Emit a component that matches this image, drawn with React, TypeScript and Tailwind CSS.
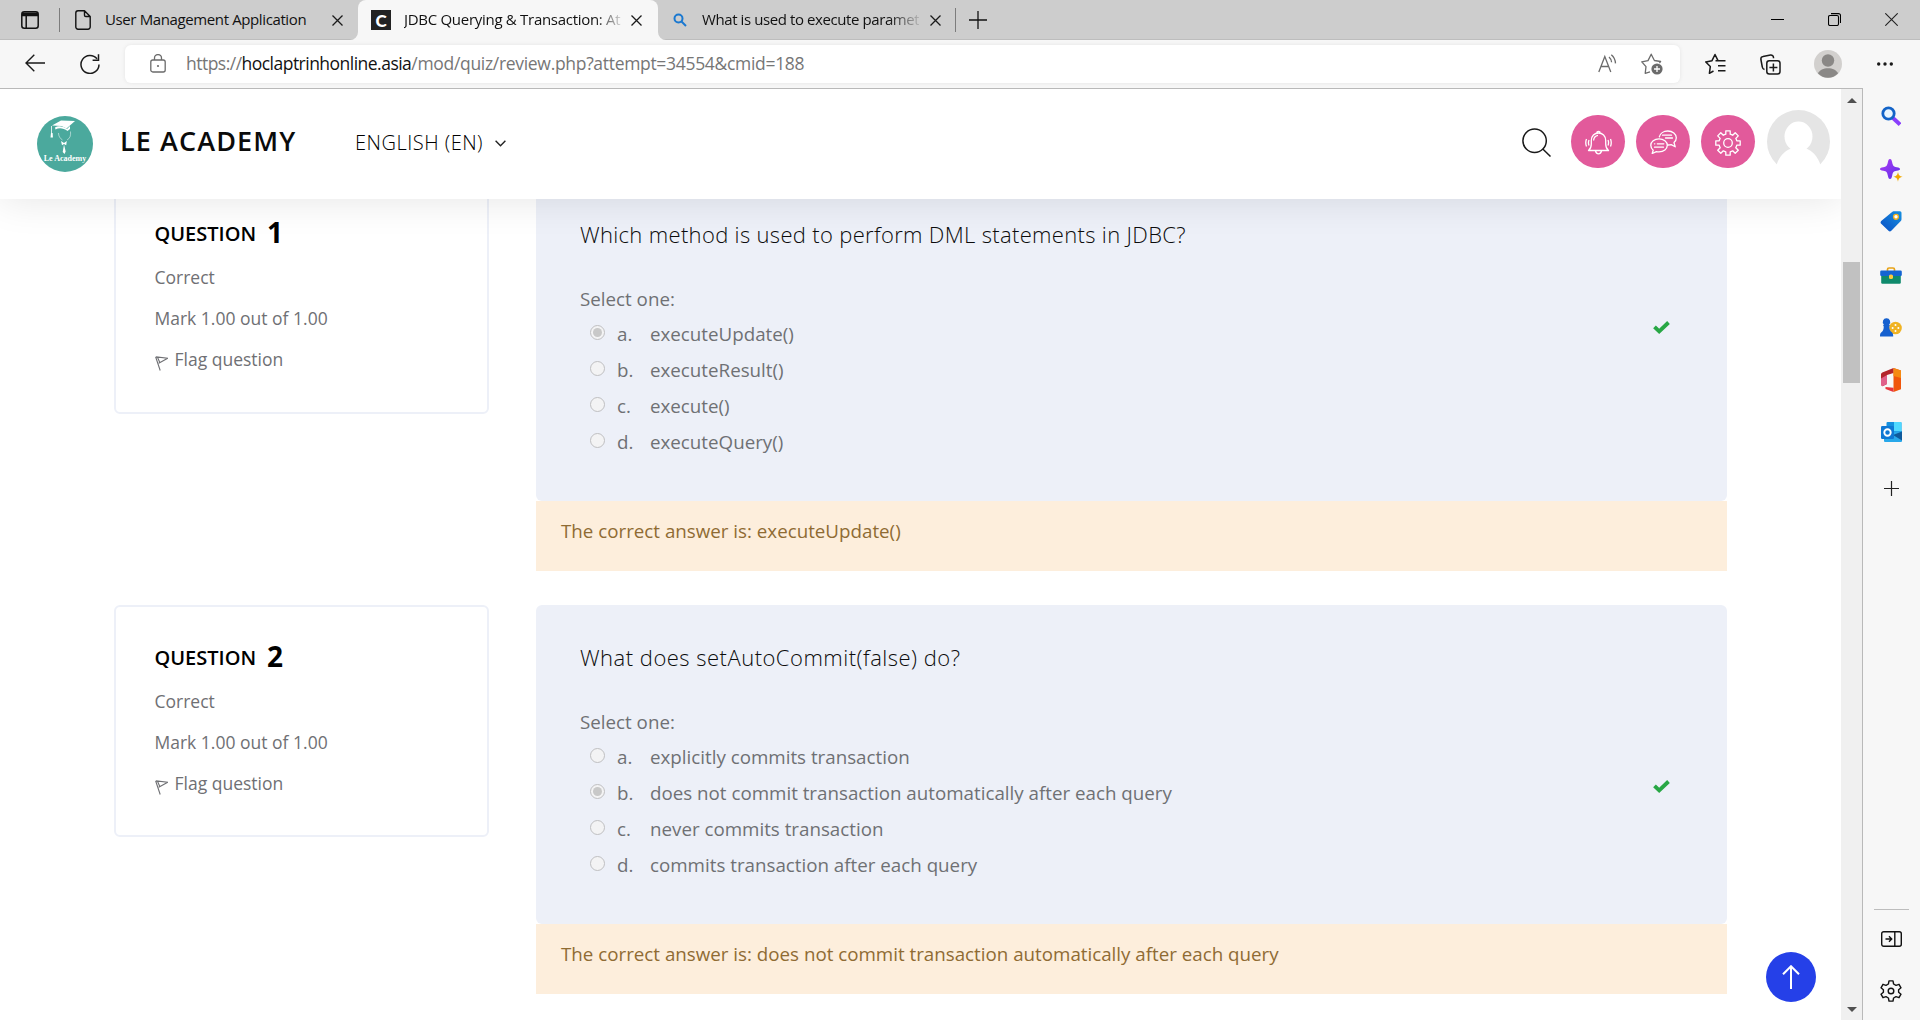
import type { ReactNode } from "react";

type Answer = { letter: string; text: string; chosen?: boolean };
type Question = { no: number; title: string; titleClass: string; infoClass: string; answers: Answer[]; correct: string };

const questions: Question[] = [
  {
    no: 1,
    title: "Which method is used to perform DML statements in JDBC?",
    titleClass: "tracking-[0.33px] -mt-px",
    infoClass: "-mt-px",
    answers: [
      { letter: "a.", text: "executeUpdate()", chosen: true },
      { letter: "b.", text: "executeResult()" },
      { letter: "c.", text: "execute()" },
      { letter: "d.", text: "executeQuery()" },
    ],
    correct: "executeUpdate()",
  },
  {
    no: 2,
    title: "What does setAutoCommit(false) do?",
    titleClass: "tracking-[0.49px] -mt-px",
    infoClass: "",
    answers: [
      { letter: "a.", text: "explicitly commits transaction" },
      { letter: "b.", text: "does not commit transaction automatically after each query", chosen: true },
      { letter: "c.", text: "never commits transaction" },
      { letter: "d.", text: "commits transaction after each query" },
    ],
    correct: "does not commit transaction automatically after each query",
  },
];

const CloseX = ({ className = "" }: { className?: string }) => (
  <svg className={`h-[11px] w-[11px] shrink-0 ${className}`} viewBox="0 0 11 11" fill="none" stroke="#1a1a1a" strokeWidth="1.3">
    <path d="M.5 .5l10 10M10.5 .5l-10 10" />
  </svg>
);

const Flare = ({ className = "" }: { className?: string }) => (
  <svg className={`absolute bottom-0 h-2 w-2 ${className}`} viewBox="0 0 8 8">
    <path d="M8 0v8H0a8 8 0 0 0 8-8z" fill="#f7f7f7" />
  </svg>
);

function TabBar() {
  return (
    <div className="relative flex h-10 shrink-0 items-center bg-[#cdcdcd] text-[15px] text-[#111]">
      <div className="absolute inset-x-0 bottom-0 h-px bg-[#bdbdbd]" />
      <svg className="ml-[21px] h-[18px] w-[18px] shrink-0" viewBox="0 0 18 18" fill="none" stroke="#111" strokeWidth="1.5">
        <rect x=".8" y=".8" width="16.4" height="16.4" rx="2.5" />
        <path d="M1 3h16M1 4.5h16M5.2 5v12" strokeWidth="1.5" />
        <path d="M1.5 3h15" strokeWidth="3" />
      </svg>
      <div className="ml-5 h-6 w-px bg-[#7c7c7c]" />
      <svg className="ml-[15px] h-5 w-4 shrink-0" viewBox="0 0 16 20" fill="none" stroke="#111" strokeWidth="1.4" strokeLinejoin="round">
        <path d="M3 .8h6.500L15.200 6.500V17a2.200 2.200 0 0 1-2.200 2.200H3A2.200 2.200 0 0 1 .8 17V3A2.200 2.200 0 0 1 3 .8zM9.500 1v4.200a1.300 1.300 0 0 0 1.300 1.300H15" />
      </svg>
      <span className="-mt-0.5 ml-[14px] w-[213px] whitespace-nowrap tracking-[-0.38px]">User Management Application</span>
      <CloseX className="ml-[14px]" />
      <div className="relative ml-[15px] flex h-10 w-[300px] items-center rounded-t-lg bg-[#f7f7f7]">
        <Flare className="-left-2" />
        <Flare className="-right-2 -scale-x-100" />
        <div className="ml-[13px] flex h-5 w-5 shrink-0 items-center justify-center bg-[#222] font-['Lato'] text-[17px] leading-none font-black text-white">C</div>
        <span className="-mt-0.5 ml-[13px] w-[217px] overflow-hidden whitespace-nowrap tracking-[-0.29px] [mask-image:linear-gradient(to_right,black_88%,transparent_102%)]">
          JDBC Querying &amp; Transaction: At
        </span>
        <CloseX className="ml-[10px]" />
      </div>
      <svg className="ml-[15px] h-[14px] w-[14px] shrink-0" viewBox="0 0 14 14" fill="none" stroke="#1a78d0" strokeWidth="2">
        <circle cx="5.500" cy="5.500" r="4" />
        <path d="M8.500 8.500l4.500 4.500" />
      </svg>
      <span className="-mt-0.5 ml-[15px] w-[217px] overflow-hidden whitespace-nowrap tracking-[-0.41px] [mask-image:linear-gradient(to_right,black_86%,transparent_102%)]">
        What is used to execute paramet
      </span>
      <CloseX className="ml-[11px]" />
      <div className="ml-[14px] h-6 w-px bg-[#7c7c7c]" />
      <svg className="-mt-px ml-[13px] h-[18px] w-[18px] shrink-0" viewBox="0 0 18 18" stroke="#111" strokeWidth="1.3">
        <path d="M9 0v18M0 9h18" />
      </svg>
      <div className="-mt-px mr-[22px] ml-auto flex items-center gap-[44px]">
        <svg className="h-[13px] w-[13px]" viewBox="0 0 13 13" stroke="#000" strokeWidth="1">
          <path d="M0 6.500h13" />
        </svg>
        <svg className="h-[13px] w-[13px]" viewBox="0 0 13 13" fill="none" stroke="#000" strokeWidth="1.100">
          <rect x=".5" y="2.500" width="10" height="10" rx="1.500" />
          <path d="M3 .6h7.500a2 2 0 0 1 2 2v7.500" />
        </svg>
        <svg className="h-[13px] w-[13px]" viewBox="0 0 13 13" stroke="#222" strokeWidth="1.100">
          <path d="M.3 .3l12.400 12.400M12.700 .3L.3 12.700" />
        </svg>
      </div>
    </div>
  );
}

function Toolbar() {
  return (
    <div className="flex h-12 shrink-0 items-center bg-[#f7f7f7]">
      <svg className="-mt-0.5 ml-[25px] h-[18px] w-5 shrink-0" viewBox="0 0 20 18" fill="none" stroke="#1a1a1a" strokeWidth="1.400">
        <path d="M20 9H1M9.300 .7L1 9l8.300 8.300" />
      </svg>
      <svg className="ml-[35px] h-5 w-5 shrink-0" viewBox="0 0 20 20" fill="none" stroke="#1a1a1a" strokeWidth="1.500">
        <path d="M19 10.500A9 9 0 1 1 17 4.800M18.500 .3v5.900h-5.900" />
      </svg>
      <div className="ml-[25px] flex h-[38px] w-[1555px] shrink-0 items-center rounded-md bg-white shadow-[0_0_4px_rgba(0,0,0,0.08)]">
        <svg className="-mt-px ml-[25px] h-[19px] w-4 shrink-0" viewBox="0 0 16 19" fill="none" stroke="#6b6b6b" strokeWidth="1.300">
          <rect x=".8" y="6" width="14.400" height="12" rx="2" />
          <path d="M4.500 6V4a3.500 3.500 0 0 1 7 0v2" />
          <circle cx="8" cy="12" r="1.100" fill="#6b6b6b" stroke="none" />
        </svg>
        <span className="-mt-0.5 ml-5 text-[17.5px] whitespace-nowrap text-[#767676]">
          <span className="tracking-[-0.52px]">
            https://<span className="text-[#111]">hoclaptrinhonline.asia</span>
          </span>
          <span className="tracking-[-0.31px]">/mod/quiz/review.php?attempt=34554&amp;cmid=188</span>
        </span>
        <svg className="-mt-0.5 ml-auto h-[19px] w-5 shrink-0" viewBox="0 0 20 19" fill="none" stroke="#6b6b6b" strokeWidth="1.300">
          <path d="M.8 18L6.800 2.500 12.800 18M3 12.500h7.600M11 3c1.600 1.400 2.400 3 2.600 5.200M13.300 .8c2.600 2.200 4 5 4.200 8.600" />
        </svg>
        <svg className="mr-[17px] ml-[23px] h-[22px] w-[22px] shrink-0" viewBox="0 0 22 22" fill="none" stroke="#6b6b6b" strokeWidth="1.300" strokeLinejoin="round">
          <path d="M9 18.800L4.200 20.300l.8-6.600L.8 8.800l6.200-1.200L10.200 1.200l3.200 6.300 6.200 1-1.300 1.500" />
          <circle cx="16" cy="16" r="5.600" fill="#6b6b6b" stroke="none" />
          <path d="M16 13v6M13 16h6" stroke="#fff" />
        </svg>
      </div>
      <svg className="-mt-px ml-[25px] h-[22px] w-[21px] shrink-0" viewBox="0 0 21 22" fill="none" stroke="#1a1a1a" strokeWidth="1.500" strokeLinejoin="round">
        <path d="M8.500 18L4.400 20.300l.9-6.700L.8 8.900l6.200-1.200L10 1.500l3 6.200M10.500 7.800H20.500M13 12.800h7.500M13 17.800h7.500" />
      </svg>
      <svg className="ml-[34px] h-[21px] w-[21px] shrink-0" viewBox="0 0 21 21" fill="none" stroke="#1a1a1a" strokeWidth="1.500" strokeLinejoin="round">
        <rect x="6.800" y="6.800" width="13.200" height="13.200" rx="2.500" />
        <path d="M13.400 9.500v8M9.400 13.500h8M4.500 15.500A3 3 0 0 1 2.300 13L.9 5.500A2.600 2.600 0 0 1 3 2.600L10.500 1A2.600 2.600 0 0 1 13.500 3.500v.8" />
      </svg>
      <svg className="ml-[33px] h-7 w-7 shrink-0" viewBox="0 0 28 28">
        <circle cx="14" cy="14" r="14" fill="#d2d0ce" />
        <circle cx="14" cy="10.500" r="6.200" fill="#8a8886" />
        <path d="M4 23.500C5.500 20 9.500 18.200 14 18.200S22.500 20 24 23.500A14 14 0 0 1 4 23.500z" fill="#8a8886" />
      </svg>
      <svg className="-mt-px ml-[35px] h-1 w-4 shrink-0" viewBox="0 0 16 4" fill="#1a1a1a">
        <circle cx="1.700" cy="2" r="1.700" />
        <circle cx="8" cy="2" r="1.700" />
        <circle cx="14.300" cy="2" r="1.700" />
      </svg>
    </div>
  );
}

function Logo() {
  return (
    <div className="relative ml-[37px] h-14 w-14 shrink-0 rounded-full bg-[#4ba99d]">
      <svg className="h-14 w-14" viewBox="0 0 56 56" fill="#fff">
        <path d="M15 9.500L24 4.500l14 .5-8.500 7.500-5-2.500z" />
        <path d="M18 11.500c3-2 8-1.500 12 1.500l3-3v3l-2.500 2c-4-3-8.500-3.500-12-1.500z" />
        <path d="M14.500 10v7" fill="none" stroke="#fff" strokeWidth=".8" />
        <path d="M14 17h1.600l.3 4.500h-2.400z" />
        <path d="M33.500 15.500c.5 4-.5 7-3.500 8.500M21.500 17c0 3 1.500 5.500 4 7" fill="none" stroke="#fff" strokeWidth=".5" />
        <path d="M24 25l3 2 2.800-2-.6 4.200-2.200-1.200-2 1.200zM27 28.500l1.700 7-1.200 2.500-1.800-2z" />
      </svg>
      <span className="absolute inset-x-0 top-[38px] text-center font-['Liberation_Serif'] text-[8px] leading-[10px] font-bold whitespace-nowrap text-white">Le Academy</span>
    </div>
  );
}

const RoundButton = ({ children }: { children: ReactNode }) => (
  <div className="flex h-[53px] w-[54px] shrink-0 items-center justify-center rounded-full bg-[#e25a9b]">{children}</div>
);

function Header() {
  return (
    <header className="relative z-10 flex h-[110px] shrink-0 items-center bg-white shadow-[0_0_40px_rgba(0,0,0,0.11)]">
      <Logo />
      <span className="-mt-[7px] ml-[27px] w-[180px] text-[27px] leading-[36px] font-semibold tracking-[1.1px] whitespace-nowrap text-[#0b0b0b]">LE ACADEMY</span>
      <span className="-mt-[2px] ml-[55px] w-[130px] text-[20px] leading-[30px] font-light tracking-[0.5px] whitespace-nowrap text-[#000]">ENGLISH (EN)</span>
      <svg className="-mt-px ml-[10px] h-[7px] w-[11px]" viewBox="0 0 11 7" fill="none" stroke="#222" strokeWidth="1.400">
        <path d="M.6 .8l4.900 4.900L10.400 .8" />
      </svg>
      <svg className="-mt-[3px] mr-[20px] ml-auto h-[29px] w-[29px] shrink-0" viewBox="0 0 29 29" fill="none" stroke="#1a1a1a" strokeWidth="1.500">
        <circle cx="12.600" cy="12.700" r="11.700" />
        <path d="M20.800 21l7.700 7.500" />
      </svg>
      <div className="-mt-[5px] flex gap-[11px]">
        <RoundButton>
          <svg className="mt-0.5 h-[25px] w-[27px]" viewBox="0 0 27 25" fill="none" stroke="#fff" strokeWidth="1.300" strokeLinejoin="round">
            <path d="M3.500 20.500c2.200-1.800 2.800-3.500 2.800-6.500v-3.500C6.300 6 9.500 3 13.500 3s7.200 3 7.200 7.500V14c0 3 .6 4.700 2.800 6.500zM11.800 3a1.700 1.700 0 1 1 3.400 0M10.500 21c.5 1.800 1.600 2.800 3 2.800s2.500-1 3-2.800M8.600 10.500c.2-3 1.800-4.800 4.400-5.200M1.500 9c-1 2.500-1 5 0 7.500M4 10c-.8 2-.8 3.500 0 5.500M25.500 9c1 2.500 1 5 0 7.500M23 10c.8 2 .8 3.500 0 5.500" />
          </svg>
        </RoundButton>
        <RoundButton>
          <svg className="h-6 w-[27px]" viewBox="0 0 27 24" fill="none" stroke="#fff" strokeWidth="1.300" strokeLinejoin="round" strokeLinecap="round">
            <path d="M9.300 6.800C10 3.500 13.500 1 17.800 1c4.800 0 8.500 3 8.500 6.800 0 2-.8 3.600-2.300 4.800l1.200 4.200-4-2.200c-.9.300-2 .4-3 .4M9 8.800c-4.600 0-8.200 2.800-8.200 6.500 0 2 .9 3.700 2.400 4.900L2.200 23.500l4.200-1.900c.8.200 1.700.3 2.600.3 4.700 0 8.300-2.900 8.300-6.600S13.700 8.800 9 8.800zM12.500 5.200h9M15.500 8h7M4.500 13.800h.3M7.300 13.800h6.500M4.500 17.200h9" />
          </svg>
        </RoundButton>
        <RoundButton>
          <svg className="mt-0.5 h-[26px] w-[26px]" viewBox="0 0 26 26" fill="none" stroke="#fff" strokeWidth="1.300" strokeLinejoin="round">
            <path d="M10.800 .8h4.400v3.400a9 9 0 0 1 2.500 1.100l2.500-2.500 3.100 3.100-2.500 2.500a9 9 0 0 1 1 2.400h3.400v4.400h-3.400a9 9 0 0 1-1 2.500l2.500 2.500-3.100 3.100-2.500-2.500a9 9 0 0 1-2.500 1v3.400h-4.400v-3.400a9 9 0 0 1-2.500-1l-2.500 2.500-3.100-3.100 2.500-2.500a9 9 0 0 1-1-2.500H.8v-4.400h3.400a9 9 0 0 1 1-2.400L2.700 5.900l3.100-3.100 2.500 2.500a9 9 0 0 1 2.500-1.100z" />
            <circle cx="13" cy="13" r="4.300" />
          </svg>
        </RoundButton>
      </div>
      <svg className="-mt-[5px] mr-[11px] ml-[12px] h-[63px] w-[63px] shrink-0" viewBox="0 0 63 63">
        <circle cx="31.500" cy="31.500" r="31.500" fill="#e5e5e5" />
        <ellipse cx="31.500" cy="26.500" rx="14" ry="15" fill="#fff" />
        <path d="M9.500 55C12 47 18 39.500 26 38h11c8 1.500 14 9 16.500 17l-6 8h-32z" fill="#fff" />
      </svg>
    </header>
  );
}

const Radio = ({ on }: { on?: boolean }) => (
  <span className="-mt-[3px] flex h-[15px] w-[15px] shrink-0 items-center justify-center rounded-full border border-[#bfbfc1] bg-[#f3f3f4]">
    {on && <span className="h-[9px] w-[9px] rounded-full bg-[#c8c8c8]" />}
  </span>
);

function QuestionRow({ q }: { q: Question }) {
  return (
    <section className="mb-[34px] ml-[114px] flex w-[1613px] items-start gap-[47px]">
      <div className="h-[232px] w-[375px] shrink-0 rounded-[6px] border-2 border-[#edf0f8] pt-7 pl-[38.5px] text-[17.5px] leading-[41px] text-[#6f7074]">
        <div className={q.infoClass}>
          <h3 className="mb-2 flex h-[38px] items-center gap-[11px] text-black">
            <span className="mt-[6px] text-[20px] font-semibold">QUESTION</span>
            <span className="mt-1 text-[28px] font-bold">{q.no}</span>
          </h3>
          <div>Correct</div>
          <div>Mark 1.00 out of 1.00</div>
          <div className="flex items-center">
            <svg className="mt-[7px] mr-[7px] h-[15px] w-[13px]" viewBox="0 0 13 15" fill="none" stroke="#6f7074" strokeWidth="1.100">
              <path d="M.6 .8l4.600 13.700M1 .9l11.700 1.300-9 5M2.500 1.200L5 7" />
            </svg>
            Flag question
          </div>
        </div>
      </div>
      <div className="w-[1191px] text-[18.75px] leading-[28px]">
        <div className="h-[319px] rounded-[6px] bg-[#edf0f8] pt-[38px] pl-[44px] text-[#6f7074]">
          <h4 className={`mb-[36px] h-[30px] text-[22px] leading-[30px] font-light whitespace-nowrap text-[#0c0c0c] ${q.titleClass}`}>{q.title}</h4>
          <div className="mb-[3px]">Select one:</div>
          {q.answers.map((a) => (
            <div key={a.letter} className="flex h-9 items-center pl-[10px]">
              <Radio on={a.chosen} />
              <span className="ml-[12px] w-[33px]">{a.letter}</span>
              <span className="whitespace-nowrap">{a.text}</span>
              {a.chosen && (
                <svg className="-mt-[13px] mr-[57px] ml-auto h-[13px] w-[17px]" viewBox="0 0 17 13" fill="none" stroke="#28a745" strokeWidth="3.900">
                  <path d="M1.500 5.800l4.700 4.500L15.500 1.500" />
                </svg>
              )}
            </div>
          ))}
        </div>
        <div className="h-[70px] bg-[#fdeedc] pt-4 pl-[25px] text-[#8f6b33]">The correct answer is: {q.correct}</div>
      </div>
    </section>
  );
}

function Scrollbar() {
  return (
    <div className="flex w-[21px] shrink-0 flex-col items-center bg-[#f0f0f0]">
      <svg className="mt-[9px] h-[5px] w-[10px]" viewBox="0 0 10 5" fill="#505050">
        <path d="M0 5l5-5 5 5z" />
      </svg>
      <div className="mt-[159px] h-[121px] w-[17px] bg-[#c1c1c1]" />
      <svg className="mt-auto mb-[8px] h-[5px] w-[10px]" viewBox="0 0 10 5" fill="#505050">
        <path d="M0 0l5 5 5-5z" />
      </svg>
    </div>
  );
}

function Sidebar() {
  return (
    <aside className="flex w-[56px] shrink-0 flex-col items-center bg-[#f7f7f7]">
      <svg className="mt-[18px] h-5 w-5" viewBox="0 0 20 20" fill="none">
        <path d="M12 12l7 6.500" stroke="#8a3ffc" strokeWidth="3.800" />
        <circle cx="7.500" cy="7.500" r="5.700" stroke="#1464c8" strokeWidth="2.800" fill="#eaf6ff" />
      </svg>
      <svg className="mt-[33px] h-[23px] w-[23px]" viewBox="0 0 23 23">
        <defs>
          <linearGradient id="spark" x1="0" y1="0" x2="1" y2="1">
            <stop offset="0" stopColor="#b03cf5" />
            <stop offset="1" stopColor="#5a30e8" />
          </linearGradient>
        </defs>
        <path d="M10 0c1.200 0 1.700 1 2.200 3.500.8 3.500 1.300 4 4.500 4.700 2.500.5 3.300.8 3.300 1.800s-.8 1.300-3.300 1.800c-3.200.7-3.700 1.200-4.500 4.700C11.700 19 11.200 20 10 20s-1.700-1-2.200-3.500c-.8-3.500-1.300-4-4.500-4.700C.8 11.300 0 11 0 10s.8-1.300 3.300-1.800c3.200-.7 3.700-1.200 4.500-4.700C8.300 1 8.800 0 10 0z" fill="url(#spark)" />
        <path d="M18 13c.7 3 1.300 4 4.700 4.800-3.400.8-4 1.700-4.700 4.900-.7-3.200-1.300-4.100-4.700-4.900 3.400-.8 4-1.800 4.700-4.800z" fill="#f2a900" />
      </svg>
      <svg className="mt-[29px] h-[21px] w-[22px]" viewBox="0 0 22 21">
        <defs>
          <linearGradient id="tag" x1="1" y1="0" x2="0" y2="1">
            <stop offset="0" stopColor="#1690e0" />
            <stop offset="1" stopColor="#0a4fc4" />
          </linearGradient>
        </defs>
        <path d="M11.500 1.500C12.500.6 13 .3 14.500.3H20a1.500 1.500 0 0 1 1.500 1.500V8c0 1.200-.4 1.800-1.200 2.600l-9 9.200a2 2 0 0 1-2.800 0l-7.300-7a2 2 0 0 1 0-2.700z" fill="url(#tag)" />
        <circle cx="16" cy="5.800" r="2.400" fill="#fff" stroke="#f2b01e" strokeWidth="1.400" />
      </svg>
      <svg className="mt-[35px] h-[17px] w-[22px]" viewBox="0 0 22 17">
        <path d="M7.500 5V2.500a1.500 1.500 0 0 1 1.500-1.500h4a1.500 1.500 0 0 1 1.500 1.500V5" fill="none" stroke="#e8a317" strokeWidth="1.700" />
        <path d="M1.200 8h19.600v7.500a1.200 1.200 0 0 1-1.200 1.200H2.400a1.200 1.200 0 0 1-1.200-1.200z" fill="#0f8a6c" />
        <rect x=".2" y="3.500" width="21.600" height="5.500" rx="1.200" fill="#1464d2" />
        <rect x="9" y="7.500" width="4" height="4.500" rx="1.600" fill="#ffc83d" />
      </svg>
      <svg className="mt-[34px] h-[19px] w-[22px]" viewBox="0 0 22 19">
        <circle cx="15.500" cy="10" r="6.300" fill="#f0b323" />
        <g fill="#fff">
          <circle cx="15.500" cy="7" r="1" />
          <circle cx="15.500" cy="13" r="1" />
          <circle cx="12.600" cy="10" r="1" />
          <circle cx="18.400" cy="10" r="1" />
        </g>
        <path d="M6.500.2a3.600 3.600 0 0 1 2.600 6.200c.9.300.9 1.700.1 2 .2 2.800.8 4.600 2.600 5.800 1.200.8 1.400 2 1.400 4.300H0c0-2.300.3-3.500 1.400-4.300C3.200 13 3.600 11.200 3.800 8.400c-.8-.3-.8-1.700.1-2A3.600 3.600 0 0 1 6.500.2z" fill="#1560cf" />
      </svg>
      <svg className="mt-[31px] h-6 w-5" viewBox="0 0 20 24">
        <path d="M12.500 0L20 2.500v18.800L12.500 24z" fill="#f0560c" />
        <path d="M12.500 0v5L6 7v9l-4.500 2.200L0 17V6.500a2 2 0 0 1 1.300-2z" fill="#b3242b" />
        <path d="M0 10.500l6-3.500v9l-4.500 2.200L0 17z" fill="#e0608a" />
        <path d="M4.500 19l8 .8V24L4.500 21z" fill="#e8353c" />
        <path d="M12.500 0L20 2.500V10l-7.500-2z" fill="#f58a12" />
      </svg>
      <svg className="mt-[30px] h-5 w-[21px]" viewBox="0 0 21 20">
        <rect x="5.500" y="0" width="15" height="12" rx="1" fill="#1490df" />
        <path d="M13 0h6.500a1 1 0 0 1 1 1v8H13z" fill="#50d9ff" />
        <path d="M3 10l18-1v10a1 1 0 0 1-1 1H4a1 1 0 0 1-1-1z" fill="#28a8ea" />
        <path d="M21 9.500v9L12 13z" fill="#0f5a9c" />
        <rect x="0" y="4" width="13" height="13" rx="1.200" fill="#0f78d4" />
        <circle cx="6.500" cy="10.500" r="3.200" fill="none" stroke="#fff" strokeWidth="1.900" />
      </svg>
      <svg className="mt-[39px] h-[15px] w-[15px]" viewBox="0 0 15 15" stroke="#222" strokeWidth="1.200">
        <path d="M7.500 0v15M0 7.500h15" />
      </svg>
      <div className="mt-auto h-px w-[35px] bg-[#bdbdbd]" />
      <svg className="mt-[21px] h-4 w-[21px]" viewBox="0 0 21 16" fill="none" stroke="#111" strokeWidth="1.400">
        <rect x=".7" y=".7" width="19.600" height="14.600" rx="2" />
        <path d="M13.800 1v14M4.500 8h6M8 5.300L10.700 8 8 10.700" />
      </svg>
      <svg className="mt-[33px] mb-[18px] h-[22px] w-[22px]" viewBox="0 0 22 22" fill="none" stroke="#111" strokeWidth="1.400" strokeLinejoin="round">
        <path d="M9 .9h4l.6 3.100 2.400 1.400 3-1.100 2 3.500-2.400 2v2.400l2.400 2-2 3.500-3-1.100-2.400 1.400-.6 3.100H9l-.6-3.100L6 16.600l-3 1.100-2-3.500 2.400-2V9.800L1 7.800l2-3.500 3 1.100L8.400 4z" />
        <circle cx="11" cy="11" r="2.800" />
      </svg>
    </aside>
  );
}

export default function App() {
  return (
    <div className="flex h-[1020px] w-[1920px] flex-col overflow-hidden bg-[#f7f7f7] font-['Open_Sans',sans-serif]">
      <TabBar />
      <Toolbar />
      <div className="flex min-h-0 flex-1">
        <div className="relative flex w-[1863px] shrink-0 border-t border-r border-[#b9b9b9] bg-white">
          <main className="flex w-[1841px] shrink-0 flex-col overflow-hidden">
            <Header />
            <div className="-mt-[17px]">
              {questions.map((q) => (
                <QuestionRow key={q.no} q={q} />
              ))}
            </div>
          </main>
          <Scrollbar />
          <div className="absolute top-[863px] left-[1766px] flex h-[50px] w-[50px] items-center justify-center rounded-full bg-[#2540e8]">
            <svg className="h-6 w-[18px]" viewBox="0 0 18 24" fill="none" stroke="#fff" strokeWidth="2">
              <path d="M9 24V1.500M1 9.200l8-8 8 8" />
            </svg>
          </div>
        </div>
        <Sidebar />
      </div>
    </div>
  );
}
